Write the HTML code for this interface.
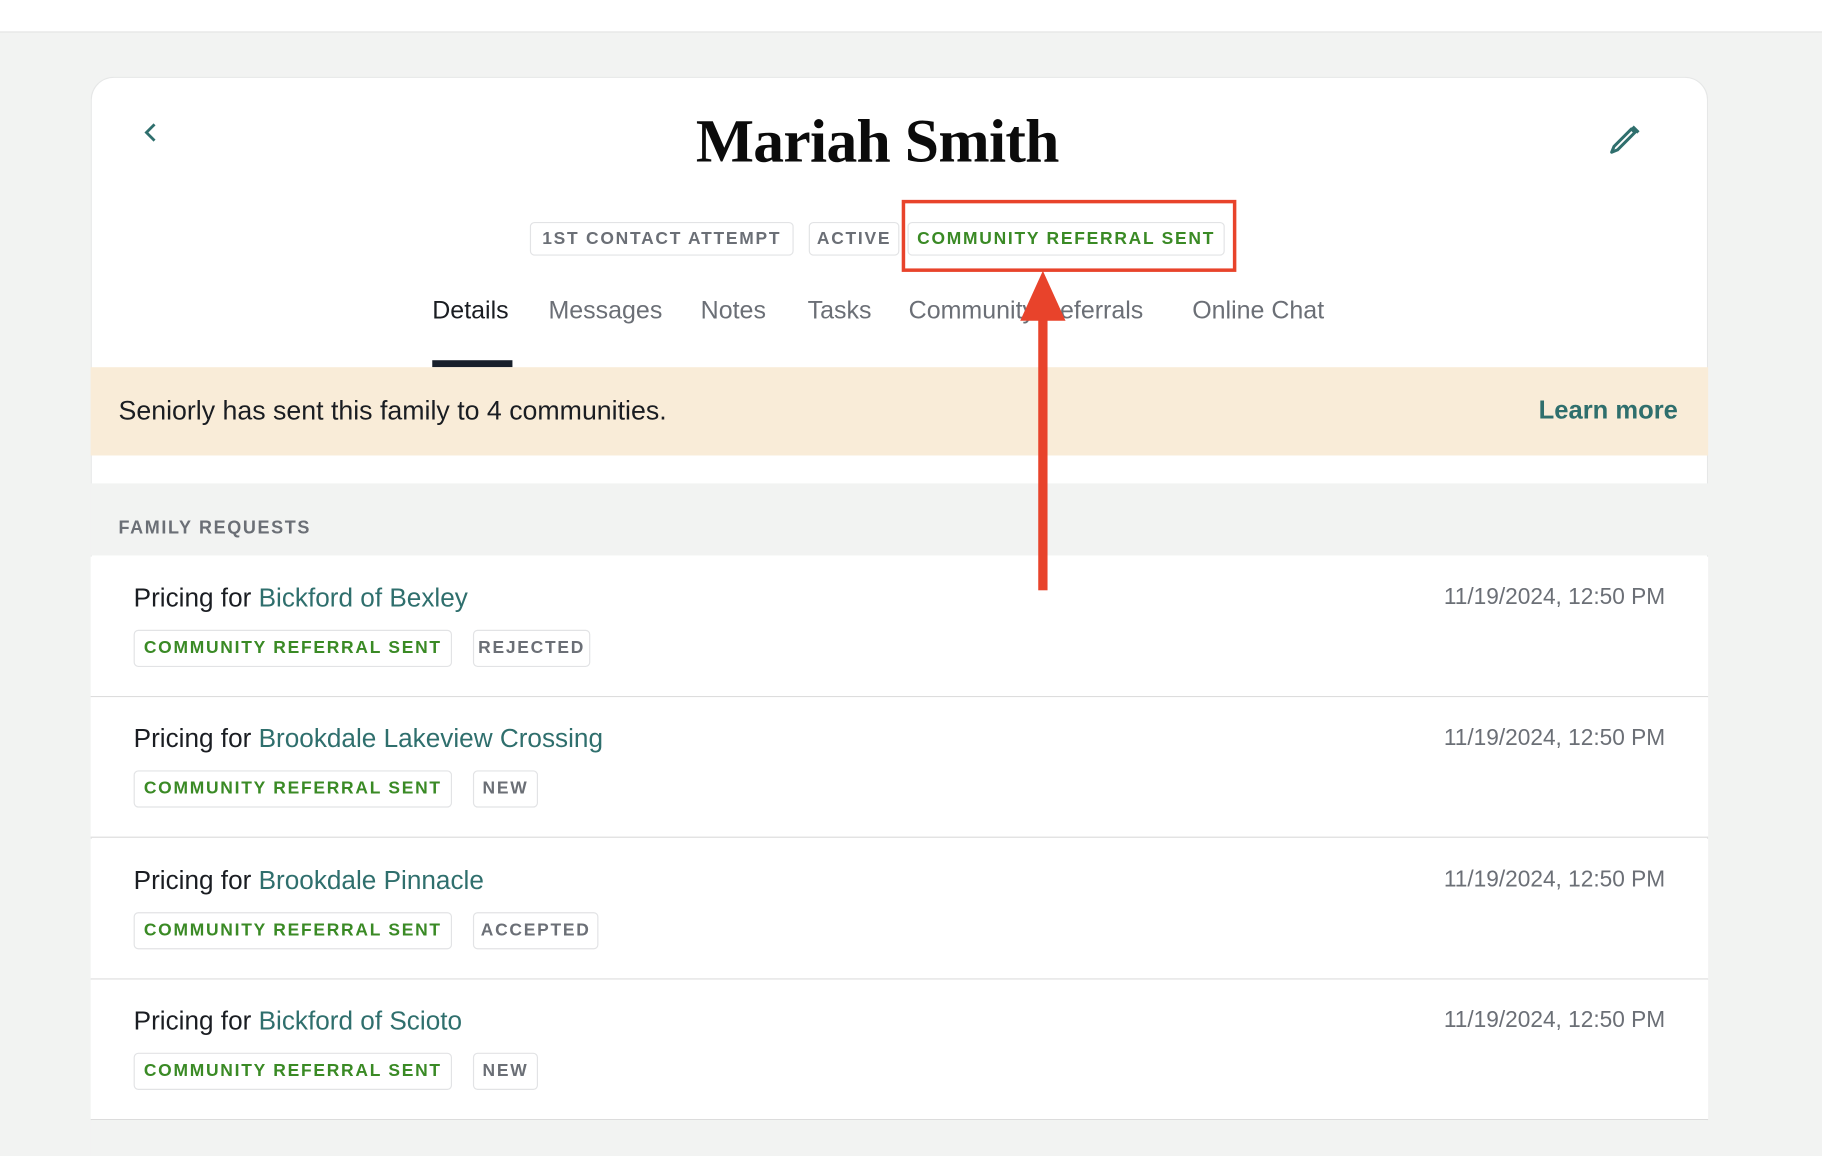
<!DOCTYPE html>
<html><head><meta charset="utf-8"><style>
html,body{margin:0;padding:0;width:1822px;height:1156px;overflow:hidden;background:#f2f3f2;}
#w{position:absolute;left:0;top:0;width:1568px;height:995px;overflow:hidden;transform:scale(1.16199);transform-origin:0 0;font-family:"Liberation Sans",sans-serif;}
.a{position:absolute;}
.tag{position:absolute;height:29px;border:1px solid #e2e3e5;border-radius:4px;box-sizing:border-box;font-size:15px;font-weight:bold;letter-spacing:1.5px;color:#6b6f76;line-height:28px;text-align:center;background:#fff;}
.g{color:#3a8a25;}
.tab{position:absolute;top:255px;font-size:21.5px;color:#6b6f76;}
.row{position:absolute;left:78px;width:1392px;height:120px;background:#fff;border-bottom:1px solid #dcdcdc;}
.row .t{position:absolute;left:37px;top:23px;font-size:22.5px;color:#1a1d22;}
.row .t span{color:#2f6f6d;}
.row .d{position:absolute;right:37px;top:24px;font-size:19.5px;color:#6b6f76;}
</style></head><body><div id="w">
<div class="a" style="left:0;top:0;width:1568px;height:27px;background:#fff;border-bottom:1px solid #e3e4e4;"></div>
<div class="a" style="left:78px;top:66px;width:1392px;height:929px;background:#fff;border:1px solid #e6e7e7;border-bottom:none;border-radius:20px 20px 0 0;box-sizing:border-box;"></div>
<svg class="a" style="left:122px;top:105px" width="16" height="18" viewBox="0 0 16 18"><path d="M11 2 L4 9 L11 16" stroke="#2f6f6d" stroke-width="2.4" fill="none"/></svg>
<svg class="a" style="left:1384px;top:105px" width="30" height="28" viewBox="0 0 30 28"><path d="M20 6 L5 21 L3 26 L8 24 L23 9 Z" stroke="#2f6f6d" stroke-width="2.6" fill="none" stroke-linejoin="round"/><path d="M22 3 L27 8 L25 10 L20 5 Z" fill="#2f6f6d"/></svg>
<div class="a" style="left:0;width:1510px;top:92px;text-align:center;font-family:'Liberation Serif',serif;font-weight:bold;font-size:53px;color:#0b0b0b;letter-spacing:-0.6px;">Mariah Smith</div>
<div class="tag" style="left:456px;top:191px;width:227px;">1ST CONTACT ATTEMPT</div>
<div class="tag" style="left:696px;top:191px;width:78px;">ACTIVE</div>
<div class="tag g" style="left:781px;top:191px;width:273px;">COMMUNITY REFERRAL SENT</div>
<div class="a" style="left:776px;top:172px;width:288px;height:62px;border:3px solid #e8432b;box-sizing:border-box;"></div>
<div class="tab" style="left:372px;color:#1a1d22;">Details</div>
<div class="tab" style="left:472px;">Messages</div>
<div class="tab" style="left:603px;">Notes</div>
<div class="tab" style="left:695px;">Tasks</div>
<div class="tab" style="left:782px;">Community Referrals</div>
<div class="tab" style="left:1026px;">Online Chat</div>
<div class="a" style="left:372px;top:310px;width:69px;height:6px;background:#18202c;"></div>
<div class="a" style="left:78px;top:316px;width:1392px;height:76px;background:#f9ecd8;"></div>
<div class="a" style="left:102px;top:340px;font-size:23px;color:#1a1d22;">Seniorly has sent this family to 4 communities.</div>
<div class="a" style="right:124px;top:340px;font-size:22px;font-weight:bold;color:#2f6f6d;">Learn more</div>
<div class="a" style="left:78px;top:416px;width:1392px;height:62px;background:#f2f3f2;"></div>
<div class="a" style="left:102px;top:446px;font-size:15.5px;font-weight:bold;letter-spacing:1.4px;color:#6b6f76;">FAMILY REQUESTS</div>

<div class="row" style="top:479px;"><div class="t">Pricing for <span>Bickford of Bexley</span></div><div class="d">11/19/2024, 12:50 PM</div>
<div class="tag g" style="left:37px;top:63px;width:274px;height:32px;line-height:30px;">COMMUNITY REFERRAL SENT</div><div class="tag" style="left:329px;top:63px;width:101px;height:32px;line-height:30px;">REJECTED</div></div>
<div class="row" style="top:600px;"><div class="t">Pricing for <span>Brookdale Lakeview Crossing</span></div><div class="d">11/19/2024, 12:50 PM</div>
<div class="tag g" style="left:37px;top:63px;width:274px;height:32px;line-height:30px;">COMMUNITY REFERRAL SENT</div><div class="tag" style="left:329px;top:63px;width:56px;height:32px;line-height:30px;">NEW</div></div>
<div class="row" style="top:722px;"><div class="t">Pricing for <span>Brookdale Pinnacle</span></div><div class="d">11/19/2024, 12:50 PM</div>
<div class="tag g" style="left:37px;top:63px;width:274px;height:32px;line-height:30px;">COMMUNITY REFERRAL SENT</div><div class="tag" style="left:329px;top:63px;width:108px;height:32px;line-height:30px;">ACCEPTED</div></div>
<div class="row" style="top:843px;"><div class="t">Pricing for <span>Bickford of Scioto</span></div><div class="d">11/19/2024, 12:50 PM</div>
<div class="tag g" style="left:37px;top:63px;width:274px;height:32px;line-height:30px;">COMMUNITY REFERRAL SENT</div><div class="tag" style="left:329px;top:63px;width:56px;height:32px;line-height:30px;">NEW</div></div>
<div class="a" style="left:78px;top:964px;width:1392px;height:31px;background:#f2f3f2;"></div>

<svg class="a" style="left:870px;top:230px" width="56" height="280" viewBox="0 0 56 280"><rect x="23.5" y="38" width="8" height="240" fill="#e8432b"/><path d="M27.5 3 L8 46 L47 46 Z" fill="#e8432b"/></svg>
</div></body></html>
